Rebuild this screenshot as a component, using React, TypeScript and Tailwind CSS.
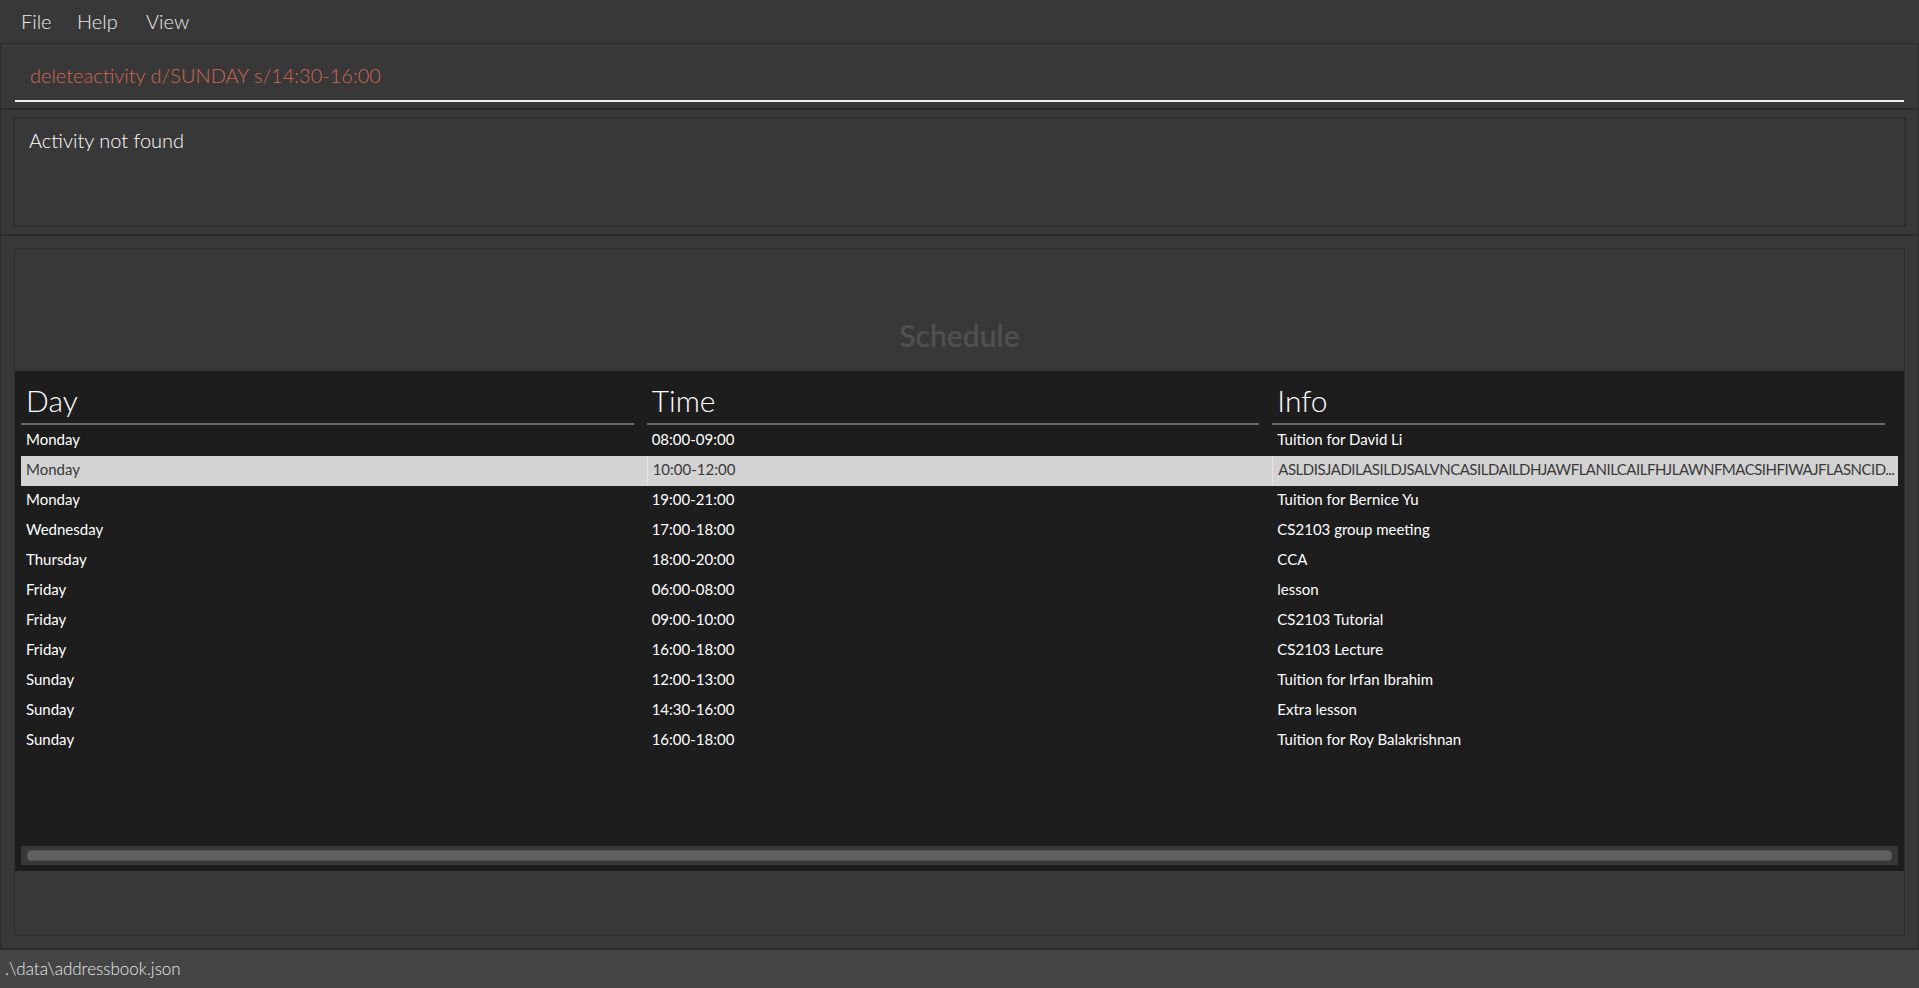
const rows: [string, string, string][] = [
  ["Monday", "08:00-09:00", "Tuition for David Li"],
  ["Monday", "10:00-12:00", "ASLDISJADILASILDJSALVNCASILDAILDHJAWFLANILCAILFHJLAWNFMACSIHFIWAJFLASNCID..."],
  ["Monday", "19:00-21:00", "Tuition for Bernice Yu"],
  ["Wednesday", "17:00-18:00", "CS2103 group meeting"],
  ["Thursday", "18:00-20:00", "CCA"],
  ["Friday", "06:00-08:00", "lesson"],
  ["Friday", "09:00-10:00", "CS2103 Tutorial"],
  ["Friday", "16:00-18:00", "CS2103 Lecture"],
  ["Sunday", "12:00-13:00", "Tuition for Irfan Ibrahim"],
  ["Sunday", "14:30-16:00", "Extra lesson"],
  ["Sunday", "16:00-18:00", "Tuition for Roy Balakrishnan"],
];

const SELECTED = 1;

function cellClass(i: number, j: number) {
  const base = "pl-[5px] text-[15px] leading-[27px] whitespace-nowrap overflow-hidden";
  if (i !== SELECTED || j === 0) return base;
  if (j === 2) return base + " border-l border-[#e4e4e4] tracking-[-0.5px]";
  return base + " border-l border-[#e4e4e4]";
}

export default function App() {
  return (
    <div className="h-screen w-full flex flex-col overflow-hidden bg-[#383838] font-['Lato','Open_Sans',sans-serif]">
      {/* menu bar */}
      <div className="h-[44px] shrink-0 flex items-center pl-[21px] pb-[1px] border-b border-[#2c2c2c] text-[20px] font-light text-white/90">
        <span className="w-[56px]">File</span>
        <span className="w-[69px]">Help</span>
        <span>View</span>
      </div>

      {/* command box */}
      <div className="h-[66px] shrink-0 px-[14px] border-b-2 border-x border-[#2c2c2c]">
        <div className="h-[58px] border-b-2 border-[#f2f2f2] pl-[15px] pt-[19px] text-[20px] leading-[24px] font-light text-[#d06651]">
          deleteactivity d/SUNDAY s/14:30-16:00
        </div>
      </div>

      {/* result display */}
      <div className="h-[126px] shrink-0 px-[12px] pt-[7px] pb-[7px] border-b-2 border-x border-[#2c2c2c]">
        <div className="h-full border-2 border-[#2f2f2f] pl-[14px] pt-[9px] text-[20px] leading-[24px] font-light text-white">
          Activity not found
        </div>
      </div>

      {/* schedule panel */}
      <div className="h-[714px] shrink-0 px-[13px] pt-[12px] pb-[12px] border-b-2 border-x border-[#2c2c2c]">
        <div className="h-full flex flex-col border border-[#2f2f2f]">
          <div className="h-[122px] shrink-0 pt-[68px] text-center text-[30px] leading-[36px] font-semibold text-[#505050]">
            Schedule
          </div>

          <div className="h-[500px] shrink-0 flex flex-col bg-[#1d1d1d] px-[6px] pt-[12px] pb-[6px]">
            <div className="grid grid-cols-3 shrink-0">
              {["Day", "Time", "Info"].map((h) => (
                <div key={h} className="pr-[13px]">
                  <div className="h-[42px] pl-[5px] border-b-2 border-[#6a6a6a] text-[30px] leading-[34px] font-light text-white">
                    {h}
                  </div>
                </div>
              ))}
            </div>

            <div className="flex flex-col pt-[1px]">
              {rows.map((r, i) => (
                <div
                  key={i}
                  className={
                    i === SELECTED
                      ? "grid grid-cols-3 h-[30px] bg-[#d3d3d3] text-[#3a3a3a]"
                      : "grid grid-cols-3 h-[30px] text-white"
                  }
                >
                  {r.map((c, j) => (
                    <div key={j} className={cellClass(i, j)}>
                      {c}
                    </div>
                  ))}
                </div>
              ))}
            </div>

            <div className="flex-1" />

            {/* horizontal scrollbar */}
            <div className="h-[19px] shrink-0 bg-[#383838] px-[6px] py-[4px]">
              <div className="h-full rounded-[4px] bg-[#606060] border border-[#555555]" />
            </div>
          </div>

          <div className="flex-1" />
        </div>
      </div>

      {/* status bar */}
      <div className="flex-1 bg-[#454545] pl-[5px] pt-[9px] text-[17px] leading-[20px] font-light text-[#e8e8e8]">
        .\data\addressbook.json
      </div>
    </div>
  );
}
